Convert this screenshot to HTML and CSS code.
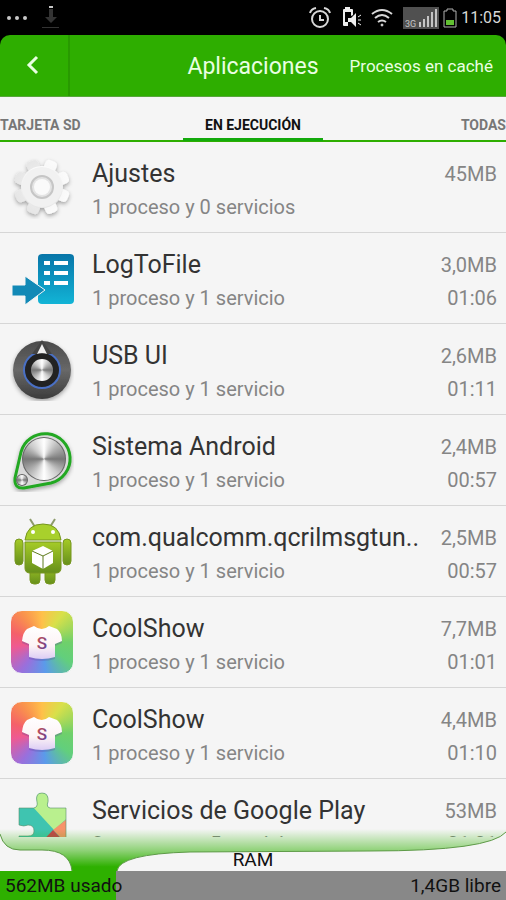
FILE: index.html
```html
<!DOCTYPE html>
<html lang="es">
<head>
    <meta charset="UTF-8">
    <meta name="viewport" content="width=device-width, initial-scale=1.0">
    <title>Aplicaciones</title>
    <link rel="stylesheet" href="styles.css">
</head>
<body>
    <!-- Definiciones compartidas por los iconos -->
    <svg class="defs" width="0" height="0" aria-hidden="true">
        <defs>
            <linearGradient id="gearFill" x1="0" y1="0" x2="0" y2="1">
                <stop offset="0" stop-color="#fbfbfb"/>
                <stop offset="1" stop-color="#e6e6e6"/>
            </linearGradient>
            <linearGradient id="blueFill" x1="0" y1="0" x2="0" y2="1">
                <stop offset="0" stop-color="#0875a8"/>
                <stop offset="1" stop-color="#12b4d6"/>
            </linearGradient>
            <linearGradient id="darkFill" x1="0" y1="0" x2="0" y2="1">
                <stop offset="0" stop-color="#4a4a4a"/>
                <stop offset="0.5" stop-color="#686868"/>
                <stop offset="1" stop-color="#3c3c3c"/>
            </linearGradient>
            <linearGradient id="droidFill" x1="0" y1="0" x2="0" y2="1">
                <stop offset="0" stop-color="#a5cb27"/>
                <stop offset="1" stop-color="#668f1b"/>
            </linearGradient>
            <linearGradient id="shirtFill" x1="0" y1="0" x2="0" y2="1">
                <stop offset="0" stop-color="#ffffff"/>
                <stop offset="0.6" stop-color="#fdf3f5"/>
                <stop offset="1" stop-color="#dccdf5"/>
            </linearGradient>
            <linearGradient id="letterFill" x1="0" y1="0" x2="1" y2="1">
                <stop offset="0" stop-color="#e0503c"/>
                <stop offset="1" stop-color="#4a3fae"/>
            </linearGradient>
            <filter id="soft" x="-20%" y="-20%" width="140%" height="150%">
                <feDropShadow dx="0" dy="2" stdDeviation="2" flood-color="#000" flood-opacity="0.35"/>
            </filter>
            <symbol id="shirt" viewBox="0 0 62 62">
                <path d="M23 17q8 6 15 0l8 3q5 4 5 12l-7 3v13q-13 4-26 0V35l-7-3q1-9 5-12z" fill="#5d4aa0" opacity="0.3"/>
                <path d="M23 15q8 6 15 0l8 3q5 4 5 12l-7 3v13q-13 4-26 0V33l-7-3q1-9 5-12z" fill="url(#shirtFill)"/>
                <text x="31" y="38" text-anchor="middle" class="shirt-letter" fill="url(#letterFill)">S</text>
            </symbol>
        </defs>
    </svg>

    <div class="status-bar">
        <div class="status-group">
            <svg width="64" height="36" viewBox="0 0 64 36" aria-hidden="true">
                <g fill="#c8c8c8">
                    <circle cx="9" cy="18" r="2"/>
                    <circle cx="17" cy="18" r="2"/>
                    <circle cx="25" cy="18" r="2"/>
                </g>
                <path d="M49 9h4v8h4l-6 6-6-6h4zM42 27h17v1H42z" fill="#333"/>
                <path d="M49 6h4v2h-4z" fill="#c8c8c8"/>
            </svg>
        </div>
        <div class="status-group">
            <svg width="22" height="22" viewBox="0 0 22 22" fill="none" stroke="#d8d8d8" stroke-width="2" aria-hidden="true">
                <circle cx="11" cy="12" r="8"/>
                <path d="M11 8v5h4M1 6q1-4 6-5M21 6q-1-4-6-5"/>
            </svg>
            <svg width="20" height="22" viewBox="0 0 20 22" aria-hidden="true">
                <path d="M2 3q0-1 1-1h1V0h5v2h2q1 0 1 1v5l-2 1V5H4v10h3v4H3q-1 0-1-1z" fill="#eee"/>
                <path d="M7 11h3l5-5v14l-5-5H7z" fill="#eee"/>
                <path d="M17 10l3-2M17 13h3M17 16l3 2" stroke="#eee" stroke-width="1"/>
            </svg>
            <svg width="22" height="22" viewBox="0 0 22 22" fill="none" stroke="#d8d8d8" stroke-width="2" aria-hidden="true">
                <path d="M1 7q10-8 20 0M4 11q7-6 14 0M7 15q4-3 8 0"/>
                <circle cx="11" cy="18" r="1" fill="#d8d8d8" stroke-width="1"/>
            </svg>
            <svg class="signal" width="36" height="22" viewBox="0 0 36 22" aria-hidden="true">
                <path fill="#505050" d="M0 0h36v22H0z"/>
                <text x="2" y="20" class="signal-label">3G</text>
                <path d="M16 15h2v5h-2zM20 12h2v8h-2zM24 9h2v11h-2zM28 5h2v15h-2zM32 2h2v18h-2z" fill="#c4c4c4"/>
            </svg>
            <svg width="14" height="22" viewBox="0 0 14 22" aria-hidden="true">
                <path d="M4 4V2h6v2h3v16H1V4z" fill="none" stroke="#b0b0b0" stroke-width="1"/>
                <path d="M3 13h8v5H3z" fill="#62c032"/>
            </svg>
            <span class="clock">11:05</span>
        </div>
    </div>

    <header class="app-header">
        <button type="button" class="back-button" aria-label="Volver">
            <svg width="14" height="22" viewBox="0 0 14 22" fill="none" stroke="#e9ffe2" stroke-width="3">
                <path d="M12 4L4 12l8 8"/>
            </svg>
        </button>
        <h1>Aplicaciones</h1>
        <a href="#" class="cache-link">Procesos en caché</a>
    </header>

    <nav class="tabs">
        <a href="#">TARJETA SD</a>
        <a href="#" class="active">EN EJECUCIÓN</a>
        <a href="#">TODAS</a>
    </nav>

    <ul class="app-list">
        <li>
            <svg class="app-icon" viewBox="0 0 64 64" aria-hidden="true">
                <g filter="url(#soft)" fill="url(#gearFill)">
                    <rect x="26" y="4" width="12" height="56" rx="4" transform="rotate(22 32 32)"/>
                    <rect x="26" y="4" width="12" height="56" rx="4" transform="rotate(67 32 32)"/>
                    <rect x="26" y="4" width="12" height="56" rx="4" transform="rotate(112 32 32)"/>
                    <rect x="26" y="4" width="12" height="56" rx="4" transform="rotate(157 32 32)"/>
                    <circle cx="32" cy="32" r="21"/>
                </g>
                <circle cx="32" cy="32" r="20" fill="#f1f1f1"/>
                <circle cx="32" cy="32" r="11" fill="#e4e4e4" stroke="#c6c6c6" stroke-width="2"/>
                <circle cx="32" cy="32" r="8" fill="#fafafa"/>
            </svg>
            <div class="app-info">
                <h2>Ajustes</h2>
                <p>1 proceso y 0 servicios</p>
            </div>
            <div class="app-usage">
                <span>45MB</span>
            </div>
        </li>
        <li>
            <svg class="app-icon" viewBox="0 0 64 64" aria-hidden="true">
                <rect x="28" y="8" width="36" height="50" rx="4" fill="url(#blueFill)"/>
                <path d="M34 15h6v4h-6zM44 15h14v4H44zM34 25h6v4h-6zM44 25h14v4H44zM34 35h6v4h-6zM44 35h14v4H44z" fill="#fff"/>
                <path d="M2 39h13v-9l20 14-20 15V50H2z" fill="#1289b6" stroke="#f5f5f5" stroke-width="1"/>
            </svg>
            <div class="app-info">
                <h2>LogToFile</h2>
                <p>1 proceso y 1 servicio</p>
            </div>
            <div class="app-usage">
                <span>3,0MB</span>
                <span>01:06</span>
            </div>
        </li>
        <li>
            <svg class="app-icon" viewBox="0 0 64 64" aria-hidden="true">
                <circle cx="32" cy="33" r="29" fill="url(#darkFill)" filter="url(#soft)"/>
                <circle cx="32" cy="33" r="18" fill="#222" stroke="#4a70c4" stroke-width="2"/>
                <path d="M22 17l10-14 10 14z" fill="#444"/>
                <path d="M27 17l5-10 5 10q-5-2-10 0z" fill="#eee"/>
                <foreignObject x="21" y="22" width="22" height="22">
                    <div class="metal"></div>
                </foreignObject>
            </svg>
            <div class="app-info">
                <h2>USB UI</h2>
                <p>1 proceso y 1 servicio</p>
            </div>
            <div class="app-usage">
                <span>2,6MB</span>
                <span>01:11</span>
            </div>
        </li>
        <li>
            <svg class="app-icon" viewBox="0 0 64 64" aria-hidden="true">
                <path d="M11 24A25 25 0 1 1 41 55L14 60Q4 61 5 50z" fill="#d9d9d9" stroke="#22a822" stroke-width="3" filter="url(#soft)"/>
                <circle cx="34" cy="31" r="22" fill="#666"/>
                <foreignObject x="13" y="10" width="42" height="42">
                    <div class="metal"></div>
                </foreignObject>
                <circle cx="12" cy="52" r="6" fill="#666"/>
                <foreignObject x="7" y="47" width="10" height="10">
                    <div class="metal"></div>
                </foreignObject>
            </svg>
            <div class="app-info">
                <h2>Sistema Android</h2>
                <p>1 proceso y 1 servicio</p>
            </div>
            <div class="app-usage">
                <span>2,4MB</span>
                <span>00:57</span>
            </div>
        </li>
        <li>
            <svg class="app-icon tall" viewBox="0 0 64 68" aria-hidden="true">
                <path d="M20 2l5 8M45 2l-5 8" stroke="#8d9b6a" stroke-width="2"/>
                <g fill="url(#droidFill)" stroke="#76961f" stroke-width="1">
                    <rect x="20" y="46" width="10" height="21" rx="4"/>
                    <rect x="35" y="46" width="10" height="21" rx="4"/>
                    <rect x="5" y="22" width="8" height="26" rx="4"/>
                    <rect x="53" y="22" width="8" height="26" rx="4"/>
                    <path d="M15 25h36v26q0 5-5 5H20q-5 0-5-5z"/>
                    <path d="M15 23Q17 7 33 7t18 16z" fill="#a8d02c"/>
                </g>
                <circle cx="23" cy="15" r="2" fill="#fff"/>
                <circle cx="43" cy="15" r="2" fill="#fff"/>
                <path d="M33 29l10 5v12l-10 6-11-6V34z" fill="#fff"/>
                <path d="M22 34l11 5 10-5M33 39v13" fill="none" stroke="#5f7c1e" stroke-width="1"/>
            </svg>
            <div class="app-info">
                <h2>com.qualcomm.qcrilmsgtun..</h2>
                <p>1 proceso y 1 servicio</p>
            </div>
            <div class="app-usage">
                <span>2,5MB</span>
                <span>00:57</span>
            </div>
        </li>
        <li>
            <svg class="app-icon rainbow" aria-hidden="true"><use href="#shirt"/></svg>
            <div class="app-info">
                <h2>CoolShow</h2>
                <p>1 proceso y 1 servicio</p>
            </div>
            <div class="app-usage">
                <span>7,7MB</span>
                <span>01:01</span>
            </div>
        </li>
        <li>
            <svg class="app-icon rainbow" aria-hidden="true"><use href="#shirt"/></svg>
            <div class="app-info">
                <h2>CoolShow</h2>
                <p>1 proceso y 1 servicio</p>
            </div>
            <div class="app-usage">
                <span>4,4MB</span>
                <span>01:10</span>
            </div>
        </li>
        <li>
            <svg class="app-icon" viewBox="0 0 64 64" aria-hidden="true">
                <clipPath id="puzzle">
                    <path id="puzzleEdge" d="M9 16h15q4-1 3-6-2-9 5-9t6 9q-2 5 2 6h16v47H9V44h9q6 0 6-5 0-6-6-6-4 2-9 0z"/>
                </clipPath>
                <g clip-path="url(#puzzle)">
                    <path fill="#3fc4b0" d="M0 0h64v64H0z"/>
                    <path fill="#b9f08e" d="M24 0h40v20L44 38 22 14z"/>
                    <path fill="#f7936a" d="M57 27L43 38l14 14z"/>
                    <path fill="#c8414d" d="M43 38L26 56h34z"/>
                </g>
                <use href="#puzzleEdge" fill="none" stroke="#5c8f6c" stroke-opacity="0.6"/>
            </svg>
            <div class="app-info">
                <h2>Servicios de Google Play</h2>
                <p>2 procesos y 5 servicios</p>
            </div>
            <div class="app-usage">
                <span>53MB</span>
                <span>01:01</span>
            </div>
        </li>
    </ul>

    <footer class="ram">
        <!-- Embudo verde que une la lista con la memoria usada -->
        <svg class="ram-funnel" viewBox="0 0 506 42" preserveAspectRatio="none" aria-hidden="true">
            <defs>
                <linearGradient id="funnelFill" gradientUnits="userSpaceOnUse" x1="0" y1="0" x2="0" y2="42">
                    <stop offset="0" stop-color="#2eb000" stop-opacity="0"/>
                    <stop offset="0.5" stop-color="#2eb000" stop-opacity="0.5"/>
                    <stop offset="0.9" stop-color="#2eb000"/>
                </linearGradient>
            </defs>
            <path d="M0 0v5q4 16 20 16h22q28 0 30 21h45q2-17 73-19l180-1q120 0 136-19V0z" fill="url(#funnelFill)"/>
            <path d="M0 5q4 16 20 16h22q28 0 30 21M117 42q2-17 73-19l180-1q120 0 136-19" fill="none" stroke="#5e9a48" stroke-width="1"/>
        </svg>
        <div class="ram-title">RAM</div>
        <div class="ram-bar">
            <span>562MB usado</span>
            <span>1,4GB libre</span>
        </div>
    </footer>
</body>
</html>
```

FILE: styles.css
```css
* {
    box-sizing: border-box;
}

body {
    margin: 0;
    height: 100vh;
    display: flex;
    flex-direction: column;
    overflow: hidden;
    background-color: #000;
    color: #333;
    font-family: Roboto, sans-serif;
}

h1, h2, p, ul {
    margin: 0;
    padding: 0;
    font-weight: 400;
}

a {
    color: inherit;
    text-decoration: none;
}

.defs {
    position: absolute;
}

/* Barra de estado */
.status-bar {
    flex: none;
    height: 35px;
    display: flex;
    justify-content: space-between;
    align-items: center;
    padding-right: 5px;
    color: #d8d8d8;
}

.status-group {
    display: flex;
    align-items: center;
    gap: 10px;
}

.signal {
    margin-right: -6px;
}

.signal-label {
    font-size: 9px;
    fill: #c4c4c4;
}

.clock {
    margin-left: -6px;
    font-size: 16px;
}

/* Cabecera */
.app-header {
    flex: none;
    height: 62px;
    display: grid;
    grid-template-columns: 1fr auto 1fr;
    align-items: center;
    background-color: #2eae00;
    border-radius: 10px 10px 0 0;
    border-bottom: 1px solid #58a63c;
    color: #e9ffe2;
}

.back-button {
    width: 70px;
    height: 100%;
    padding: 0 4px 0 0;
    background: none;
    border: none;
    border-right: 2px solid #289a00;
    cursor: pointer;
}

.app-header h1 {
    padding-top: 2px;
    font-size: 23px;
}

.cache-link {
    justify-self: end;
    padding-right: 13px;
    font-size: 17px;
}

/* Pestañas */
.tabs {
    flex: none;
    height: 45px;
    display: grid;
    grid-template-columns: 1fr auto 1fr;
    background-color: #f5f5f5;
    border-bottom: 2px solid #2eae00;
    color: #777;
    font-size: 14px;
    font-weight: 700;
    line-height: 56px;
}

.tabs a:last-child {
    text-align: right;
}

.tabs .active {
    height: 44px;
    padding: 0 22px;
    border-bottom: 3px solid #14aa0c;
    color: #111;
}

/* Lista de aplicaciones */
.app-list {
    flex: 1;
    min-height: 0;
    overflow: hidden;
    list-style: none;
    background-color: #f5f5f5;
}

.app-list li {
    height: 91px;
    display: flex;
    align-items: center;
    padding: 0 9px 0 10px;
    border-bottom: 1px solid #d6d6d6;
}

.app-icon {
    flex: none;
    width: 64px;
    height: 64px;
    margin-right: 18px;
}

.app-icon.tall {
    height: 68px;
}

.app-info {
    flex: 1;
    min-width: 0;
    height: 60px;
    white-space: nowrap;
}

.app-info h2 {
    font-size: 25px;
    line-height: 34px;
}

.app-info p {
    font-size: 20px;
    line-height: 32px;
    color: #858585;
}

.app-usage {
    display: flex;
    flex-direction: column;
    height: 58px;
    text-align: right;
    font-size: 20px;
    line-height: 33px;
    color: #858585;
}

.metal {
    height: 100%;
    border-radius: 50%;
    background: conic-gradient(#fff, #bbb 12%, #777 25%, #ccc 38%, #fff 50%, #bbb 62%, #777 75%, #ccc 88%, #fff);
}

.rainbow {
    border: 1px solid #f5f5f5;
    border-radius: 12px;
    background: conic-gradient(#ffc04a, #d8e04a 10%, #6fd06a 25%, #62cf7c 35%, #5a9bea 48%, #9a6fdc 60%, #ee5a92 72%, #f4606a 80%, #f9904e 90%, #ffc04a);
}

.shirt-letter {
    font-size: 17px;
    font-weight: 500;
}

/* Memoria RAM */
.ram {
    flex: none;
    position: relative;
    background-color: #f5f5f5;
    color: #111;
}

.ram-funnel {
    position: absolute;
    top: -8px;
    left: 0;
    width: 100%;
    height: 42px;
}

.ram-title {
    position: relative;
    height: 34px;
    padding-top: 11px;
    text-align: center;
    font-size: 19px;
    line-height: 23px;
}

.ram-bar {
    position: relative;
    display: flex;
    justify-content: space-between;
    padding: 0 5px;
    font-size: 19px;
    line-height: 29px;
    background: linear-gradient(to right, #2eb000 23%, #888 23%);
}
```
